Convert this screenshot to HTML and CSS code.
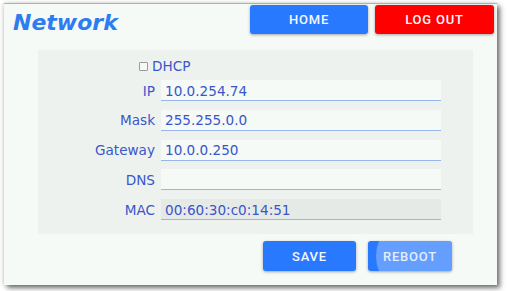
FILE: index.html
```html
<!DOCTYPE html>
<html lang="en">

<head>
    <meta charset="UTF-8">
    <meta name="viewport" content="width=device-width, initial-scale=1.0">
    <title>Network</title>
    <link rel="stylesheet" href="styles.css">
</head>

<body>
    <div class="window">
        <div class="header">
            <h1 class="title">Network</h1>
            <div class="nav">
                <button type="button" class="btn btn-home">HOME</button>
                <button type="button" class="btn btn-logout">LOG OUT</button>
            </div>
        </div>

        <form class="settings">
            <div class="dhcp-row">
                <span class="check"></span>
                <span>DHCP</span>
            </div>
            <div class="fields">
                <label for="ip">IP</label>
                <input type="text" id="ip" value="10.0.254.74">

                <label for="mask">Mask</label>
                <input type="text" id="mask" value="255.255.0.0">

                <label for="gateway">Gateway</label>
                <input type="text" id="gateway" value="10.0.0.250">

                <label for="dns">DNS</label>
                <input type="text" id="dns" value="">

                <label for="mac">MAC</label>
                <input type="text" id="mac" class="readonly" value="00:60:30:c0:14:51" readonly>
            </div>
        </form>

        <div class="footer">
            <button type="button" class="btn btn-save">SAVE</button>
            <button type="button" class="btn btn-reboot"><span class="label">REBOOT</span></button>
        </div>
    </div>
</body>

</html>
```

FILE: styles.css
```css
body {
    margin: 0;
    background-color: #ffffff;
    font-family: 'DejaVu Sans', sans-serif;
}

.window {
    margin: 3px 10px 6px 4px;
    height: 282px;
    box-sizing: border-box;
    background-color: #f5faf7;
    border-top: 1px solid #b0b0b0;
    box-shadow: -1px 0 4px rgba(0, 0, 0, 0.15), 3px 3px 5px rgba(0, 0, 0, 0.55);
}

.header {
    display: flex;
    justify-content: space-between;
    align-items: flex-start;
    padding: 1px 3px 0 9px;
}

.title {
    margin: 5px 0 0 0;
    font-size: 22px;
    font-weight: bold;
    font-style: italic;
    color: #2d7cf0;
}

.nav {
    display: flex;
    gap: 7px;
}

.btn {
    font-family: 'Roboto', sans-serif;
    font-weight: 500;
    font-size: 13px;
    letter-spacing: 0.8px;
    color: #f4f8ff;
    border: none;
    border-radius: 3px;
    height: 29px;
    box-shadow: 0 1px 3px rgba(0, 0, 0, 0.35);
    cursor: pointer;
}

.btn-home {
    width: 118px;
    background-color: #2979ff;
}

.btn-logout {
    width: 119px;
    background-color: #ff0000;
}

.settings {
    margin: 15px 24px 0 34px;
    padding: 8px 32px 14px 0;
    background-color: #eef2ef;
}

.dhcp-row {
    display: flex;
    align-items: center;
    gap: 4px;
    height: 16px;
    padding-left: 101px;
    margin-bottom: 6px;
    font-size: 13.6px;
    color: #3a56c9;
}

.check {
    width: 7px;
    height: 7px;
    border: 1px solid #9a9a9a;
    border-radius: 1px;
    background-color: #f8f8f8;
}

.fields {
    display: grid;
    grid-template-columns: 117px 280px;
    column-gap: 6px;
    row-gap: 8.75px;
    align-items: center;
}

label {
    text-align: right;
    font-size: 13.6px;
    color: #3a56c9;
}

input[type="text"] {
    height: 21px;
    box-sizing: border-box;
    margin: 0;
    padding: 1px 4px 0;
    border: none;
    border-bottom: 1px solid #98b6ec;
    background-color: #f5faf7;
    font-family: 'DejaVu Sans', sans-serif;
    font-size: 13.6px;
    color: #3a56c9;
    outline: none;
}

input.readonly {
    background-color: #e6eae7;
}

.footer {
    display: flex;
    justify-content: flex-end;
    gap: 12px;
    padding: 7px 45px 0 0;
}

.btn-save {
    width: 93px;
    height: 30px;
    background-color: #2979ff;
}

.btn-reboot {
    position: relative;
    overflow: hidden;
    width: 84px;
    height: 30px;
    background-color: #2979ff;
}

.btn-reboot::before {
    content: "";
    position: absolute;
    left: 8px;
    top: -24px;
    width: 78px;
    height: 78px;
    border-radius: 50%;
    background-color: rgba(255, 255, 255, 0.28);
}

.btn-reboot .label {
    position: relative;
    color: #e4edfd;
}
```
